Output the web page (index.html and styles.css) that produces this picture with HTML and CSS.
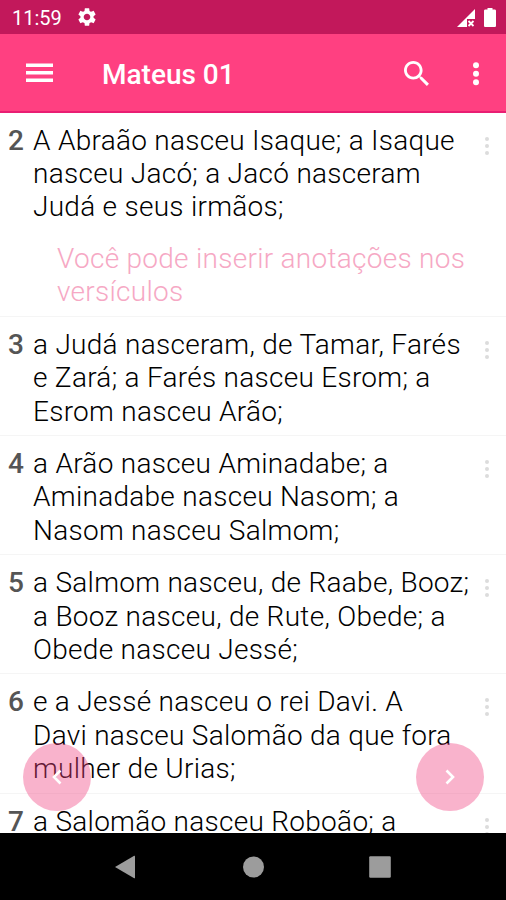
FILE: index.html
```
<!DOCTYPE html>
<html lang="pt-BR">
<head>
    <meta charset="UTF-8">
    <meta name="viewport" content="width=device-width, initial-scale=1.0">
    <title>Mateus 01</title>
    <link rel="stylesheet" href="styles.css">
</head>
<body>
    <div class="status-bar">
        <span class="clock">11:59</span>
        <svg class="gear" viewBox="0 0 24 24"><path d="M19.14 12.94c.04-.3.06-.61.06-.94 0-.32-.02-.64-.07-.94l2.03-1.58c.18-.14.23-.41.12-.61l-1.92-3.32c-.12-.22-.37-.29-.59-.22l-2.39.96c-.5-.38-1.03-.7-1.62-.94l-.36-2.54c-.04-.24-.24-.41-.48-.41h-3.84c-.24 0-.43.17-.47.41l-.36 2.54c-.59.24-1.13.57-1.62.94l-2.39-.96c-.22-.08-.47 0-.59.22L2.74 8.87c-.12.21-.08.47.12.61l2.03 1.58c-.05.3-.09.63-.09.94s.02.64.07.94l-2.03 1.58c-.18.14-.23.41-.12.61l1.92 3.32c.12.22.37.29.59.22l2.39-.96c.5.38 1.03.7 1.62.94l.36 2.54c.05.24.24.41.48.41h3.84c.24 0 .44-.17.47-.41l.36-2.54c.59-.24 1.13-.56 1.62-.94l2.39.96c.22.08.47 0 .59-.22l1.92-3.32c.12-.22.07-.47-.12-.61l-2.01-1.58zM12 15.6c-1.98 0-3.6-1.62-3.6-3.6s1.62-3.6 3.6-3.6 3.6 1.62 3.6 3.6-1.62 3.6-3.6 3.6z"/></svg>
        <svg class="signal" viewBox="0 0 18 18"><path d="M0 18L18 0V10H10V18Z"/><path class="cross" d="M11.5 12L16.5 17M16.5 12L11.5 17"/></svg>
        <svg class="battery" viewBox="0 0 12 19"><path d="M3.5 0h5v1.5h2.2c.7 0 1.3.6 1.3 1.3v14.9c0 .7-.6 1.3-1.3 1.3H1.3C.6 19 0 18.4 0 17.7V2.8c0-.7.6-1.3 1.3-1.3h2.2z"/></svg>
    </div>
    <header class="toolbar">
        <svg class="menu" viewBox="0 0 27 20"><path d="M0 .5h27V4H0zM0 8h27v3.5H0zM0 15.5h27V19H0z"/></svg>
        <h1>Mateus 01</h1>
        <svg class="search" viewBox="3 3 17.5 17.5"><path d="M15.5 14h-.79l-.28-.27C15.41 12.59 16 11.11 16 9.5 16 5.91 13.09 3 9.5 3S3 5.91 3 9.5 5.91 16 9.5 16c1.61 0 3.09-.59 4.23-1.57l.27.28v.79l5 4.99L20.49 19l-4.99-5zm-6 0C7.01 14 5 11.99 5 9.5S7.01 5 9.5 5 14 7.01 14 9.5 11.99 14 9.5 14z"/></svg>
        <svg class="more" viewBox="0 0 6 24"><circle cx="3" cy="3.2" r="3"/><circle cx="3" cy="11.7" r="3"/><circle cx="3" cy="20.2" r="3"/></svg>
    </header>

    <main class="verses">
        <article class="verse">
            <b>2</b>
            <div class="text">
                <p>A Abraão nasceu Isaque; a Isaque<br>nasceu Jacó; a Jacó nasceram<br>Judá e seus irmãos;</p>
                <p class="note">Você pode inserir anotações nos<br>versículos</p>
            </div>
            <div class="dots"><i></i><i></i><i></i></div>
        </article>
        <article class="verse">
            <b>3</b>
            <div class="text"><p>a Judá nasceram, de Tamar, Farés<br>e Zará; a Farés nasceu Esrom; a<br>Esrom nasceu Arão;</p></div>
            <div class="dots"><i></i><i></i><i></i></div>
        </article>
        <article class="verse">
            <b>4</b>
            <div class="text"><p>a Arão nasceu Aminadabe; a<br>Aminadabe nasceu Nasom; a<br>Nasom nasceu Salmom;</p></div>
            <div class="dots"><i></i><i></i><i></i></div>
        </article>
        <article class="verse">
            <b>5</b>
            <div class="text"><p>a Salmom nasceu, de Raabe, Booz;<br>a Booz nasceu, de Rute, Obede; a<br>Obede nasceu Jessé;</p></div>
            <div class="dots"><i></i><i></i><i></i></div>
        </article>
        <article class="verse">
            <b>6</b>
            <div class="text"><p>e a Jessé nasceu o rei Davi. A<br>Davi nasceu Salomão da que fora<br>mulher de Urias;</p></div>
            <div class="dots"><i></i><i></i><i></i></div>
        </article>
        <article class="verse">
            <b>7</b>
            <div class="text"><p>a Salomão nasceu Roboão; a</p></div>
            <div class="dots"><i></i><i></i><i></i></div>
        </article>
    </main>

    <button class="fab prev" aria-label="Anterior"><svg viewBox="0 0 10 16"><path d="M8.5 1.5L2 8l6.5 6.5"/></svg></button>
    <button class="fab next" aria-label="Próximo"><svg viewBox="0 0 10 16"><path d="M1.5 1.5L8 8l-6.5 6.500"/></svg></button>

    <nav class="nav-bar">
        <svg viewBox="0 0 24 24"><path d="M1 12L20.200 .8Q21 .5 21 1.300V22.700Q21 23.500 20.200 23.200Z"/></svg>
        <svg viewBox="0 0 24 24"><circle cx="12.5" cy="12" r="10.500"/></svg>
        <svg viewBox="0 0 24 24"><rect x="1.200" y="1.200" width="21.600" height="21.600" rx="1.200"/></svg>
    </nav>
</body>
</html>
```
FILE: styles.css
```
* {
    box-sizing: border-box;
}
body {
    margin: 0;
    height: 900px;
    display: flex;
    flex-direction: column;
    overflow: hidden;
    background: #fff;
    font-family: Roboto, sans-serif;
    color: #000;
}
svg {
    display: block;
    flex: none;
    fill: #fff;
}
h1, p {
    margin: 0;
}
.status-bar {
    flex: none;
    height: 34px;
    display: flex;
    align-items: center;
    padding: 0 10px 0 12px;
    background: #c2185b;
    color: #fff;
}
.clock {
    width: 50px;
    font-size: 20px;
    line-height: 24px;
    padding-top: 2px;
}
.gear {
    width: 22px;
    height: 22px;
    margin-left: 14px;
}
.signal {
    width: 18px;
    height: 18px;
    margin: 1px 9px 0 auto;
}
.cross {
    stroke: #fff;
    stroke-width: 1.8;
}
.battery {
    width: 12px;
    height: 19px;
}
.toolbar {
    flex: none;
    height: 79px;
    display: flex;
    align-items: center;
    padding: 0 25px 0 26px;
    background: #ff4081;
    border-bottom: 2px solid #e91e73;
    color: #fff;
}
.menu {
    width: 27px;
    height: 20px;
    margin-top: 1px;
}
.toolbar h1 {
    margin: 4px auto 0 49px;
    font-size: 28px;
    line-height: 33px;
    font-weight: 500;
    white-space: nowrap;
}
.search {
    width: 25px;
    height: 25px;
    margin: 1px 44px 0 0;
}
.more {
    width: 6px;
    height: 24px;
    margin: 2px 2px 0 0;
}
.verses {
    flex: 1;
    min-height: 0;
    overflow: hidden;
}
.verse {
    display: flex;
    padding: 11px 16px 7.5px 8px;
    border-bottom: 1px solid #f5f5f5;
    font-size: 28px;
    line-height: 33.2px;
}
.verse b {
    width: 25px;
    font-weight: 500;
    color: #555;
}
.text {
    flex: 1;
    font-weight: 300;
    letter-spacing: 0.28px;
    white-space: nowrap;
}
.note {
    margin-top: 18.6px;
    padding-left: 24px;
    color: #f6a8c4;
}
.dots {
    width: 5px;
    padding-top: 13px;
    display: flex;
    flex-direction: column;
    gap: 3px;
}
.dots i {
    width: 4px;
    height: 4px;
    border-radius: 50%;
    background: #dcdcdc;
}
/* page turning buttons float over the verses */
.fab {
    position: absolute;
    top: 743px;
    width: 68px;
    height: 68px;
    display: flex;
    align-items: center;
    justify-content: center;
    padding: 0;
    border: none;
    border-radius: 50%;
    background: rgba(240, 64, 128, 0.4);
}
.prev {
    left: 23px;
}
.next {
    right: 22px;
}
.fab svg {
    width: 10px;
    height: 16px;
    fill: none;
    stroke: #fff;
    stroke-width: 2.6;
}
.nav-bar {
    flex: none;
    height: 67px;
    display: flex;
    align-items: center;
    justify-content: center;
    gap: 103px;
    background: #000;
}
.nav-bar svg {
    width: 24px;
    height: 24px;
    fill: #9c9c9c;
}
```
